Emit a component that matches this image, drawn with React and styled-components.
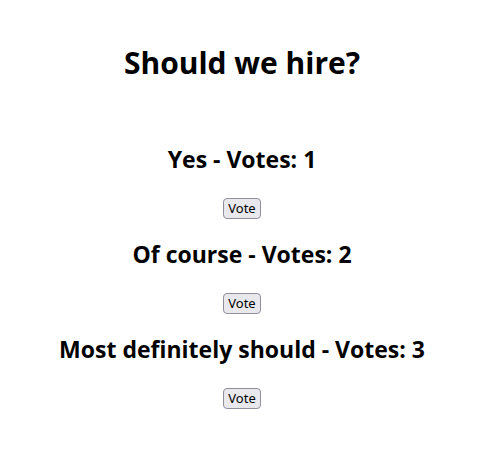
import React, { useState } from 'react';
import styled, { createGlobalStyle } from 'styled-components';

const GlobalStyle = createGlobalStyle`
  body {
    margin: 8px;
    background: #fff;
    font-family: "Open Sans", "Noto Sans", sans-serif;
    color: #000;
  }
`;

const Page = styled.div`
  display: flex;
  flex-direction: column;
  align-items: center;
  text-align: center;
`;

const Title = styled.h1`
  font-size: 30px;
  font-weight: 700;
  line-height: 42px;
  margin: 34px 0 59px;
`;

const Option = styled.div`
  display: flex;
  flex-direction: column;
  align-items: center;
`;

const OptionTitle = styled.h2`
  font-size: 23px;
  font-weight: 700;
  line-height: 32px;
  margin: 0 0 23px;
`;

const VoteButton = styled.button`
  font-family: "Noto Sans", "Open Sans", sans-serif;
  font-size: 13px;
  line-height: 17px;
  height: 21px;
  padding: 1px 4px;
  margin-bottom: 19px;
  background: #e9e9ed;
  border: 1px solid #8f8f9d;
  border-radius: 4px;
  color: #000;
  cursor: pointer;
`;

const initial = [
  { name: 'Yes', votes: 1 },
  { name: 'Of course', votes: 2 },
  { name: 'Most definitely should', votes: 3 },
];

const App = () => {
  const [options, setOptions] = useState(initial);

  const vote = (i) => {
    setOptions(options.map((o, j) => (j === i ? { ...o, votes: o.votes + 1 } : o)));
  };

  return (
    <Page>
      <GlobalStyle />
      <Title>Should we hire?</Title>
      {options.map((o, i) => (
        <Option key={o.name}>
          <OptionTitle>{o.name} - Votes: {o.votes}</OptionTitle>
          <VoteButton onClick={() => vote(i)}>Vote</VoteButton>
        </Option>
      ))}
    </Page>
  );
};

export default App;
